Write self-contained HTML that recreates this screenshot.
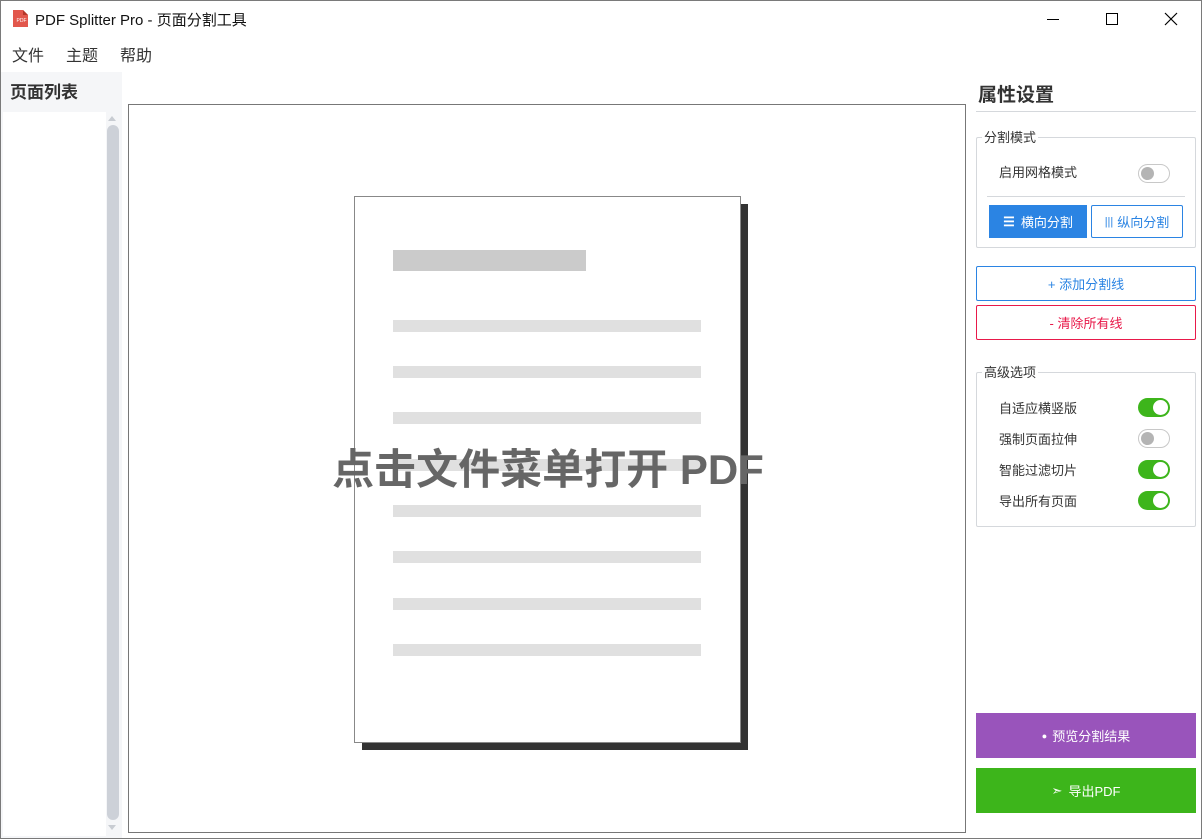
<!DOCTYPE html>
<html><head><meta charset="utf-8"><style>
*{margin:0;padding:0;box-sizing:border-box}
body{width:1202px;height:839px;position:relative;background:#fff;font-family:"Liberation Sans","Noto Sans CJK SC",sans-serif;overflow:hidden;color:#222}
.abs{position:absolute}
.win{position:absolute;left:0;top:0;width:1202px;height:839px;border:1px solid #7a7a7a}
.t{font-size:15px;white-space:nowrap}
.line{position:absolute;left:393px;width:308px;height:12px;background:#e0e0e0}
.grp{position:absolute;border:1px solid #d5d8dc;border-radius:2px}
.lg{position:absolute;font-size:13px;background:#fff;padding:0 2px;color:#333}
.lbl{position:absolute;font-size:13px;color:#333}
.tg{position:absolute;width:32px;height:19px;border-radius:10px}
.tg.on{background:#3db51b}
.tg.on::after{content:"";position:absolute;right:2px;top:2px;width:15px;height:15px;border-radius:50%;background:#fff}
.tg.off{background:#fff;border:1px solid #c8c8c8}
.tg.off::after{content:"";position:absolute;left:2px;top:2px;width:13px;height:13px;border-radius:50%;background:#b4b4b4}
.btn{position:absolute;display:flex;align-items:center;justify-content:center;font-size:13px}
</style></head><body>
<div class="win"></div>
<svg class="abs" style="left:11px;top:9px" width="18" height="19" viewBox="0 0 18 19"><path d="M2 1h10l5 5v12H2z" fill="#e2574c"/><path d="M12 1v5h5z" fill="#b53629"/><text x="5.5" y="13" font-size="5" fill="#fff" font-family="Liberation Sans">PDF</text></svg>
<div class="abs t" style="left:35px;top:9px;font-size:15px;color:#111">PDF Splitter Pro - 页面分割工具</div>
<div class="abs" style="left:1047px;top:19px;width:12px;height:1px;background:#000"></div>
<div class="abs" style="left:1106px;top:13px;width:12px;height:12px;border:1px solid #000"></div>
<svg class="abs" style="left:1164px;top:12px" width="14" height="14"><path d="M1 1L13 13M13 1L1 13" stroke="#000" stroke-width="1.2"/></svg>
<div class="abs t" style="left:12px;top:42px;color:#333;font-size:16px">文件</div>
<div class="abs t" style="left:66px;top:42px;color:#333;font-size:16px">主题</div>
<div class="abs t" style="left:120px;top:42px;color:#333;font-size:16px">帮助</div>
<div class="abs" style="left:1px;top:72px;width:121px;height:766px;background:#f5f6f8"></div>
<div class="abs" style="left:3px;top:112px;width:103px;height:724px;background:#fff"></div>
<div class="abs" style="left:10px;top:78px;font-size:17px;font-weight:bold;color:#333">页面列表</div>
<div class="abs" style="left:108px;top:116px;width:0;height:0;border-left:4px solid transparent;border-right:4px solid transparent;border-bottom:5px solid #c8ccd2"></div>
<div class="abs" style="left:107px;top:125px;width:12px;height:695px;background:#cdd1d8;border-radius:6px"></div>
<div class="abs" style="left:108px;top:825px;width:0;height:0;border-left:4px solid transparent;border-right:4px solid transparent;border-top:5px solid #c8ccd2"></div>
<div class="abs" style="left:128px;top:104px;width:838px;height:729px;border:1px solid #777"></div>
<div class="abs" style="left:362px;top:204px;width:386px;height:546px;background:#333"></div>
<div class="abs" style="left:354px;top:196px;width:387px;height:547px;background:#fff;border:1px solid #888"></div>
<div class="abs" style="left:393px;top:250px;width:193px;height:21px;background:#cbcbcb"></div>
<div class="line" style="top:320px"></div><div class="line" style="top:366px"></div><div class="line" style="top:412px"></div><div class="line" style="top:459px"></div><div class="line" style="top:505px"></div><div class="line" style="top:551px"></div><div class="line" style="top:598px"></div><div class="line" style="top:644px"></div>
<div class="abs" style="left:300px;top:444px;width:496px;text-align:center;font-size:42px;font-weight:bold;color:#666;white-space:nowrap;line-height:52px">点击文件菜单打开 PDF</div>
<div class="abs" style="left:978px;top:80px;font-size:19px;font-weight:bold;color:#333">属性设置</div>
<div class="abs" style="left:976px;top:111px;width:220px;height:1px;background:#d5d8dc"></div>
<div class="grp" style="left:976px;top:137px;width:220px;height:111px"></div>
<div class="lg" style="left:982px;top:127px">分割模式</div>
<div class="lbl" style="left:999px;top:162px">启用网格模式</div>
<div class="tg off" style="left:1138px;top:164px"></div>
<div class="abs" style="left:987px;top:196px;width:198px;height:1px;background:#d5d8dc"></div>
<div class="btn" style="left:989px;top:205px;width:98px;height:33px;background:#2b84e3;color:#fff"><span style="font-weight:bold;margin-right:6px">☰</span>横向分割</div>
<div class="btn" style="left:1091px;top:205px;width:92px;height:33px;border:1px solid #2b84e3;color:#2b84e3;border-radius:2px"><span style="margin-right:4px;font-size:11px">|||</span>纵向分割</div>
<div class="btn" style="left:976px;top:266px;width:220px;height:35px;border:1px solid #2b84e3;color:#2b84e3;border-radius:2px">+ 添加分割线</div>
<div class="btn" style="left:976px;top:305px;width:220px;height:35px;border:1px solid #e8194a;color:#e8194a;border-radius:2px">- 清除所有线</div>
<div class="grp" style="left:976px;top:372px;width:220px;height:155px"></div>
<div class="lg" style="left:982px;top:362px">高级选项</div>
<div class="lbl" style="left:999px;top:398px">自适应横竖版</div><div class="tg on" style="left:1138px;top:398px"></div>
<div class="lbl" style="left:999px;top:429px">强制页面拉伸</div><div class="tg off" style="left:1138px;top:429px"></div>
<div class="lbl" style="left:999px;top:460px">智能过滤切片</div><div class="tg on" style="left:1138px;top:460px"></div>
<div class="lbl" style="left:999px;top:491px">导出所有页面</div><div class="tg on" style="left:1138px;top:491px"></div>
<div class="btn" style="left:976px;top:713px;width:220px;height:45px;background:#9954bb;color:#fff"><span style="font-size:9px;margin-right:5px">●</span>预览分割结果</div>
<div class="btn" style="left:976px;top:768px;width:220px;height:45px;background:#3db51b;color:#fff"><span style="margin-right:6px">➣</span>导出PDF</div>
</body></html>
